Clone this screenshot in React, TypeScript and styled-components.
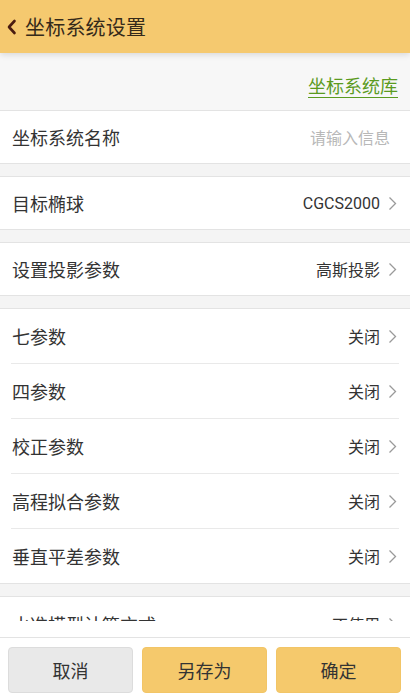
import styled, { createGlobalStyle } from 'styled-components'

const GlobalStyle = createGlobalStyle`
  html, body {
    margin: 0;
    padding: 0;
    background: #f4f4f4;
  }
  body {
    font-family: Roboto, "Noto Sans CJK SC", sans-serif;
    color: #333;
  }
`

const Page = styled.div`
  width: 410px;
  height: 698px;
  display: flex;
  flex-direction: column;
  background: #f4f4f4;
  overflow: hidden;
`

const Header = styled.header`
  position: relative;
  z-index: 1;
  height: 53px;
  flex-shrink: 0;
  display: flex;
  align-items: center;
  gap: 8px;
  padding-left: 6px;
  background: #f5c96f;
  box-shadow: 0 2px 6px rgba(0, 0, 0, 0.12);
`

const Title = styled.h1`
  margin: 0;
  font-size: 20px;
  font-weight: 400;
  color: #352a1a;
  letter-spacing: 0.2px;
`

const Scroll = styled.div`
  flex: 1;
  overflow: hidden;
`

const LinkBar = styled.div`
  height: 57px;
  box-sizing: border-box;
  padding: 6px 12px 0;
  display: flex;
  align-items: center;
  justify-content: flex-end;
  background: #f7f7f7;
`

const LibLink = styled.a`
  font-size: 18px;
  color: #5b9b1f;
  text-decoration: underline;
  text-underline-offset: 4px;
  text-decoration-thickness: 1px;
`

const Group = styled.section`
  background: #fff;
  border-top: 1px solid #e3e3e3;
  border-bottom: 1px solid #e3e3e3;
  margin-bottom: 12px;
`

const Row = styled.div<{ $h?: number }>`
  height: ${p => p.$h ?? 54}px;
  display: flex;
  align-items: center;
  justify-content: space-between;
  padding: 0 13px 0 12px;
`

const Label = styled.span`
  font-size: 18px;
  color: #333;
`

const Right = styled.span`
  display: flex;
  align-items: center;
  gap: 8px;
`

const Value = styled.span<{ $muted?: boolean }>`
  font-size: 16px;
  color: ${p => (p.$muted ? '#b8b8b8' : '#333')};
  margin-right: ${p => (p.$muted ? '7px' : '0')};
`

const Divider = styled.div`
  height: 1px;
  margin: 0 11px;
  background: #e9e9e9;
`

const Footer = styled.footer`
  flex-shrink: 0;
  background: #fff;
`

const Fade = styled.div`
  height: 16px;
  background: linear-gradient(to bottom, rgba(255, 255, 255, 0.92), #fff);
`

const ButtonBar = styled.div`
  border-top: 1px solid #e3e3e3;
  display: grid;
  grid-template-columns: repeat(3, 1fr);
  gap: 9px;
  padding: 9px 9px 5px 8px;
`

const Button = styled.button<{ $primary?: boolean }>`
  height: 46px;
  border-radius: 4px;
  border: 1px solid ${p => (p.$primary ? '#f2c567' : '#dcdcdc')};
  background: ${p => (p.$primary ? '#f5c96c' : '#e9e9e9')};
  font-family: Roboto, "Noto Sans CJK SC", sans-serif;
  font-size: 18px;
  color: #333;
`

const BackIcon = () => (
  <svg width="11" height="16" viewBox="0 0 11 16">
    <path d="M8.5 2 L3 8 L8.5 14" fill="none" stroke="#4a1c10" strokeWidth="2.6" strokeLinecap="round" strokeLinejoin="round" />
  </svg>
)

const Chevron = () => (
  <svg width="9" height="15" viewBox="0 0 9 15">
    <path d="M1.5 1.5 L7.5 7.5 L1.5 13.5" fill="none" stroke="#9a9a9a" strokeWidth="1.3" />
  </svg>
)

const params = ['七参数', '四参数', '校正参数', '高程拟合参数', '垂直平差参数']

export default function App() {
  return (
    <Page>
      <GlobalStyle />
      <Header>
        <BackIcon />
        <Title>坐标系统设置</Title>
      </Header>
      <Scroll>
        <LinkBar>
          <LibLink>坐标系统库</LibLink>
        </LinkBar>
        <Group>
          <Row $h={52}>
            <Label>坐标系统名称</Label>
            <Value $muted>请输入信息</Value>
          </Row>
        </Group>
        <Group>
          <Row $h={52}>
            <Label>目标椭球</Label>
            <Right>
              <Value>CGCS2000</Value>
              <Chevron />
            </Right>
          </Row>
        </Group>
        <Group>
          <Row $h={52}>
            <Label>设置投影参数</Label>
            <Right>
              <Value>高斯投影</Value>
              <Chevron />
            </Right>
          </Row>
        </Group>
        <Group>
          {params.map((name, i) => (
            <div key={name}>
              {i > 0 && <Divider />}
              <Row>
                <Label>{name}</Label>
                <Right>
                  <Value>关闭</Value>
                  <Chevron />
                </Right>
              </Row>
            </div>
          ))}
        </Group>
        <Group>
          <Row>
            <Label>水准模型计算方式</Label>
            <Right>
              <Value>不使用</Value>
              <Chevron />
            </Right>
          </Row>
        </Group>
      </Scroll>
      <Footer>
        <Fade />
        <ButtonBar>
          <Button>取消</Button>
          <Button $primary>另存为</Button>
          <Button $primary>确定</Button>
        </ButtonBar>
      </Footer>
    </Page>
  )
}
